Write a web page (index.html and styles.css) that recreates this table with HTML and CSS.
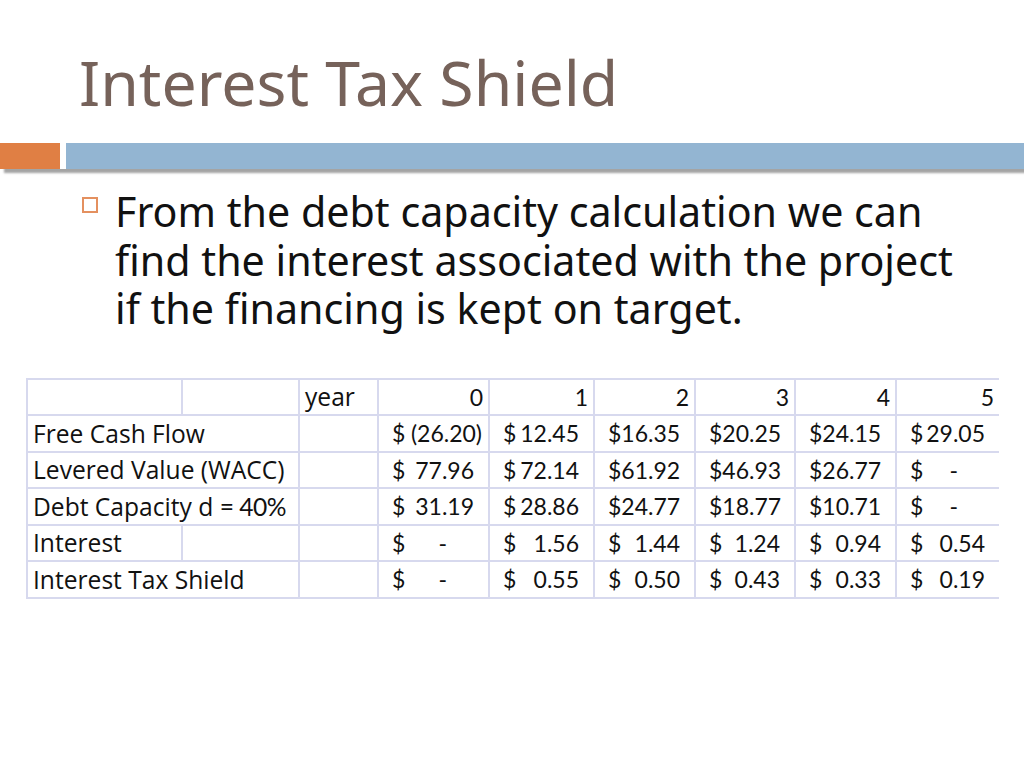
FILE: index.html
```html
<!DOCTYPE html>
<html>
<head>
<meta charset="utf-8">
<link rel="stylesheet" href="styles.css">
</head>
<body>
<div class="slide">
  <h1 class="title">Interest Tax Shield</h1>
  <div class="bars">
    <div class="bar-orange"></div>
    <div class="bar-blue"></div>
  </div>
  <ul class="bullets">
    <li>From the debt capacity calculation we can find the interest associated with the project if the financing is kept on target.</li>
  </ul>
  <table class="sheet">
    <colgroup>
      <col class="c1"><col class="c2"><col class="c3">
      <col class="c4"><col class="c5"><col class="c6">
      <col class="c7"><col class="c8"><col class="c9">
    </colgroup>
    <tr>
      <td></td><td></td><td class="lbl">year</td>
      <td class="hd">0</td><td class="hd">1</td><td class="hd">2</td><td class="hd">3</td><td class="hd">4</td><td class="hd">5</td>
    </tr>
    <tr>
      <td class="lbl" colspan="2">Free Cash Flow</td><td></td>
      <td><div class="acc"><span>$</span><span>(26.20)</span></div></td>
      <td><div class="acc"><span>$</span><span class="pos">12.45</span></div></td>
      <td><div class="acc"><span>$</span><span class="pos">16.35</span></div></td>
      <td><div class="acc"><span>$</span><span class="pos">20.25</span></div></td>
      <td><div class="acc"><span>$</span><span class="pos">24.15</span></div></td>
      <td><div class="acc"><span>$</span><span class="pos">29.05</span></div></td>
    </tr>
    <tr>
      <td class="lbl" colspan="2">Levered Value (WACC)</td><td></td>
      <td><div class="acc"><span>$</span><span class="pos">77.96</span></div></td>
      <td><div class="acc"><span>$</span><span class="pos">72.14</span></div></td>
      <td><div class="acc"><span>$</span><span class="pos">61.92</span></div></td>
      <td><div class="acc"><span>$</span><span class="pos">46.93</span></div></td>
      <td><div class="acc"><span>$</span><span class="pos">26.77</span></div></td>
      <td><div class="acc"><span>$</span><span class="dash">-</span></div></td>
    </tr>
    <tr>
      <td class="lbl" colspan="2">Debt Capacity d <span class="num">= 40%</span></td><td></td>
      <td><div class="acc"><span>$</span><span class="pos">31.19</span></div></td>
      <td><div class="acc"><span>$</span><span class="pos">28.86</span></div></td>
      <td><div class="acc"><span>$</span><span class="pos">24.77</span></div></td>
      <td><div class="acc"><span>$</span><span class="pos">18.77</span></div></td>
      <td><div class="acc"><span>$</span><span class="pos">10.71</span></div></td>
      <td><div class="acc"><span>$</span><span class="dash">-</span></div></td>
    </tr>
    <tr>
      <td class="lbl">Interest</td><td></td><td></td>
      <td><div class="acc"><span>$</span><span class="dash">-</span></div></td>
      <td><div class="acc"><span>$</span><span class="pos">1.56</span></div></td>
      <td><div class="acc"><span>$</span><span class="pos">1.44</span></div></td>
      <td><div class="acc"><span>$</span><span class="pos">1.24</span></div></td>
      <td><div class="acc"><span>$</span><span class="pos">0.94</span></div></td>
      <td><div class="acc"><span>$</span><span class="pos">0.54</span></div></td>
    </tr>
    <tr>
      <td class="lbl" colspan="2">Interest Tax Shield</td><td></td>
      <td><div class="acc"><span>$</span><span class="dash">-</span></div></td>
      <td><div class="acc"><span>$</span><span class="pos">0.55</span></div></td>
      <td><div class="acc"><span>$</span><span class="pos">0.50</span></div></td>
      <td><div class="acc"><span>$</span><span class="pos">0.43</span></div></td>
      <td><div class="acc"><span>$</span><span class="pos">0.33</span></div></td>
      <td><div class="acc"><span>$</span><span class="pos">0.19</span></div></td>
    </tr>
  </table>
</div>
</body>
</html>
```

FILE: styles.css
```css
html, body {
  margin: 0;
  padding: 0;
  background: #ffffff;
}
.slide {
  width: 1024px;
  height: 768px;
  overflow: hidden;
  position: relative;
  font-family: "Noto Sans", "Open Sans", sans-serif;
}
.title {
  margin: 0;
  padding: 47px 0 0 79px;
  height: 101px;
  box-sizing: border-box;
  font-family: "Noto Sans", "Open Sans", sans-serif;
  font-weight: 400;
  font-size: 62.5px;
  line-height: 70px;
  color: #76625a;
}
.bars {
  display: flex;
  gap: 6px;
  margin-top: 42px;
  height: 26px;
  box-shadow: 3px 5px 2px -1px rgba(90, 90, 90, 0.55);
}
.bar-orange {
  width: 60px;
  background: #e07f44;
}
.bar-blue {
  flex: 1;
  background: #93b5d2;
}
.bullets {
  list-style: none;
  margin: 18px 0 0 0;
  padding: 0 62px 0 115px;
}
.bullets li {
  position: relative;
  font-family: "Noto Sans", "Open Sans", sans-serif;
  font-size: 41.2px;
  line-height: 48.5px;
  color: #111111;
}
.bullets li::before {
  content: "";
  position: absolute;
  left: -33px;
  top: 10px;
  width: 16px;
  height: 16px;
  border: 2px solid #e4905f;
  box-sizing: border-box;
}
.sheet {
  margin: 45px 0 0 26px;
  border-collapse: collapse;
  table-layout: fixed;
  width: 972px;
  font-family: "Open Sans", "Noto Sans", sans-serif;
  font-size: 24.6px;
  color: #111111;
}
.c1 { width: 155px; }
.c2 { width: 117px; }
.c3 { width: 79px; }
.c4 { width: 111px; }
.c5 { width: 105px; }
.c6 { width: 101px; }
.c7 { width: 100px; }
.c8 { width: 101px; }
.c9 { width: 103px; }
.sheet td {
  height: 36.5px;
  padding: 0;
  border: 2px solid #d7d9ee;
  vertical-align: middle;
  white-space: nowrap;
  overflow: visible;
  box-sizing: border-box;
}
.sheet tr td:last-child {
  border-right: none;
}
.lbl {
  padding-left: 5px !important;
}
.hd {
  text-align: right;
  padding-right: 5px !important;
  font-family: "Lato", sans-serif;
  font-size: 23px;
}
.num {
  font-family: "Lato", sans-serif;
  letter-spacing: -0.5px;
}
.acc {
  display: flex;
  justify-content: space-between;
  padding: 0 6px 0 13px;
  font-family: "Lato", sans-serif;
  font-size: 23px;
}
.acc .pos {
  margin-right: 8px;
}
.acc .dash {
  margin-right: 35px;
}
```
